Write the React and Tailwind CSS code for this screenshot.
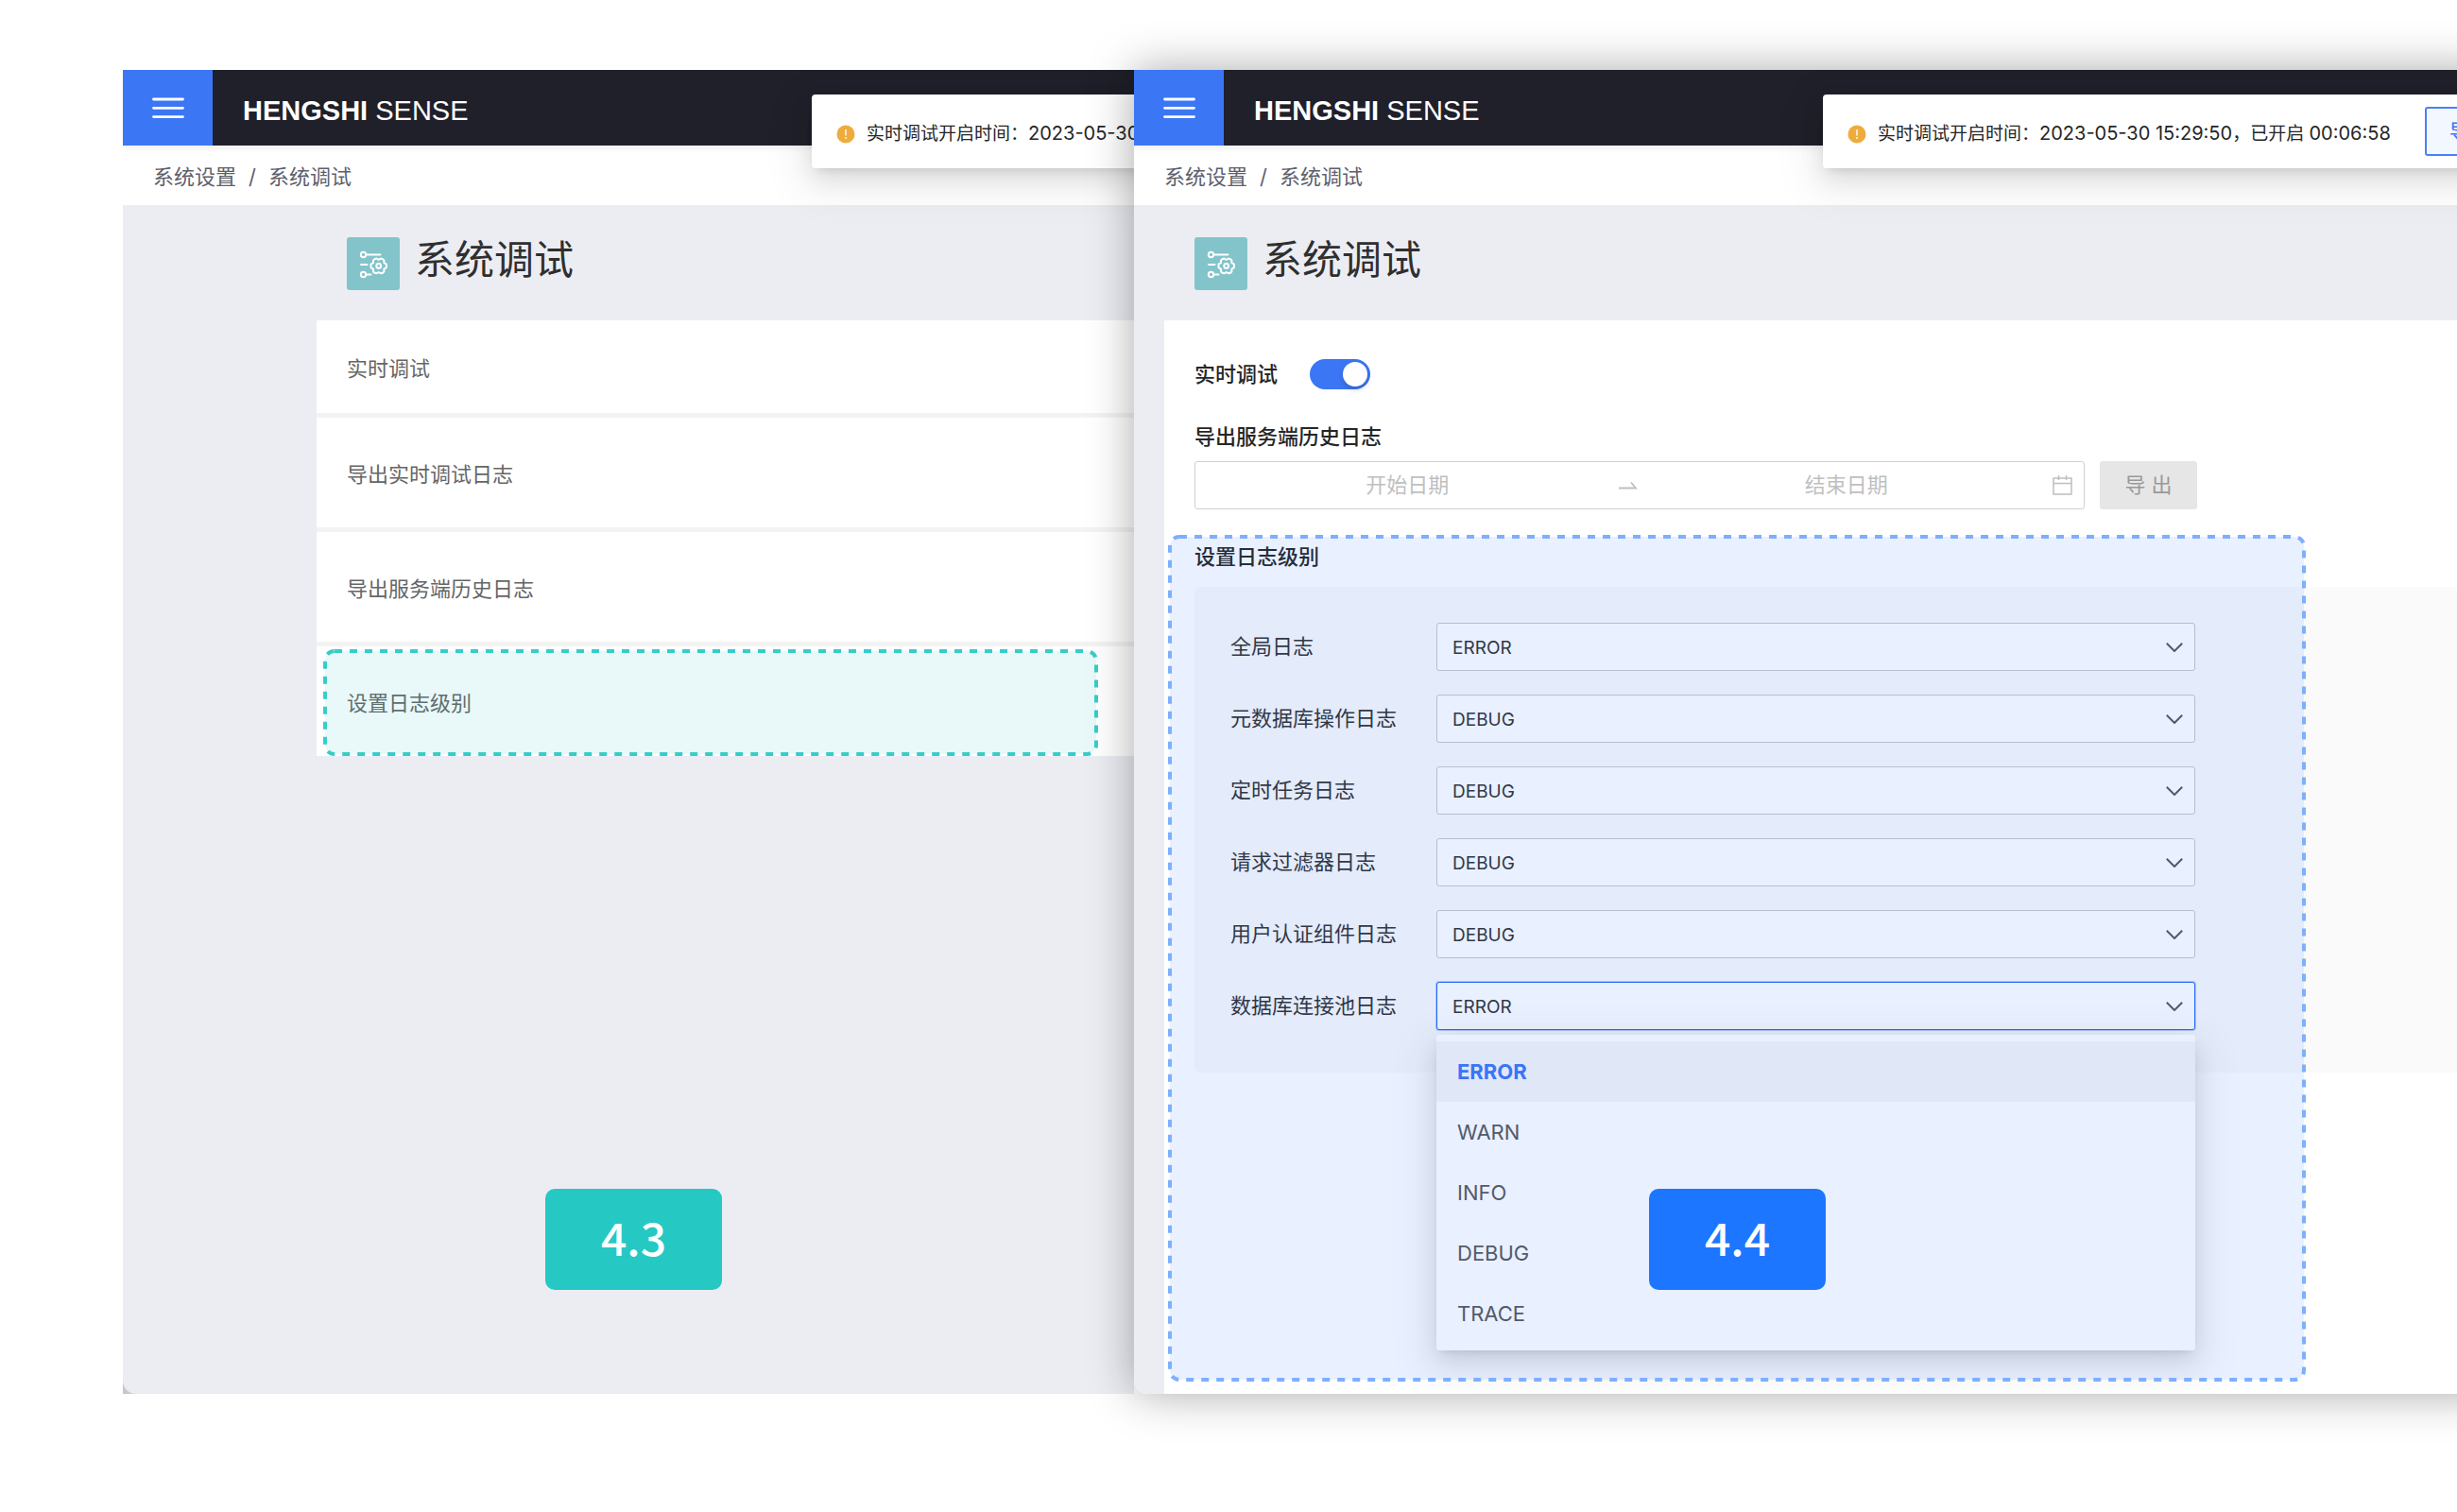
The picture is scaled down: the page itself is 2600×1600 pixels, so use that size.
import { useId, useState } from "react";

const LEVELS = ["ERROR", "WARN", "INFO", "DEBUG", "TRACE"];

const LOGGERS = [
  { id: "global", label: "全局日志", level: "ERROR" },
  { id: "metadb", label: "元数据库操作日志", level: "DEBUG" },
  { id: "schedule", label: "定时任务日志", level: "DEBUG" },
  { id: "filter", label: "请求过滤器日志", level: "DEBUG" },
  { id: "auth", label: "用户认证组件日志", level: "DEBUG" },
  { id: "pool", label: "数据库连接池日志", level: "ERROR", open: true },
];

function DebugIcon() {
  return (
    <svg
      viewBox="0 0 56 56"
      className="size-14 shrink-0 rounded-[3px] bg-[#83c4ca]"
      fill="none"
      stroke="#fff"
      strokeWidth="2"
      strokeLinecap="round"
      strokeLinejoin="round"
      aria-hidden="true"
    >
      <circle cx="17.5" cy="18.5" r="2.7" />
      <path d="M21 18.5h14.5M15 29h6.5M21 39.5h4.5" />
      <circle cx="17.5" cy="39.5" r="2.7" />
      <circle cx="33.7" cy="30.4" r="2.4" />
      <path d="M41.7 28.4Q42.4 30.4 41.7 32.4L39.4 33.7V36.3Q38.1 38.1 36 38.3L33.7 37L31.4 38.3Q29.3 38.1 28 36.3V33.7L25.7 32.4Q25 30.4 25.7 28.4L28 27.1V24.5Q29.3 22.7 31.4 22.5L33.7 23.8L36 22.5Q38.1 22.7 39.4 24.5V27.1Z" />
    </svg>
  );
}

function CalendarIcon() {
  return (
    <svg viewBox="0 0 21 21" className="size-[21px] shrink-0" fill="none" stroke="#bfbfbf" strokeWidth="1.5" aria-hidden="true">
      <path d="M1 3h19v17H1zM1 8.5h19M6.5 0v5M14.5 0v5" />
    </svg>
  );
}

function Highlight({ className, fill, stroke }) {
  return (
    <svg className={`pointer-events-none absolute overflow-visible ${className}`} aria-hidden="true">
      <rect
        x="2"
        y="2"
        rx="10"
        className="h-[calc(100%-4px)] w-[calc(100%-4px)]"
        fill={fill}
        stroke={stroke}
        strokeWidth="4"
        strokeDasharray="8 8"
      />
    </svg>
  );
}

function StepBadge({ className, children }) {
  return (
    <div
      className={`absolute bottom-[110px] flex h-[107px] w-[187px] items-center justify-center rounded-[10px] pb-2 font-["Noto_Sans_CJK_SC",sans-serif] text-[48px] leading-none font-medium text-white ${className}`}
    >
      {children}
    </div>
  );
}

function Toast() {
  return (
    <div
      role="status"
      className="absolute top-[26px] left-[729px] flex h-[78px] items-center rounded bg-white pl-[26px] pr-6 text-[19px] whitespace-nowrap text-[#262626] shadow-[0_5px_10px_-6px_rgba(0,0,0,0.16),0_10px_26px_rgba(0,0,0,0.1),0_14px_45px_13px_rgba(0,0,0,0.06)]"
    >
      <div className="flex items-center gap-3 pt-1.5">
        <svg viewBox="0 0 20 20" className="size-5 shrink-0" aria-hidden="true">
          <circle cx="10" cy="10" r="9.5" fill="#efac3e" />
          <path d="M10 5v6.5" stroke="#fff" strokeWidth="1.4" />
          <circle cx="10" cy="14" r="0.9" fill="#fff" />
        </svg>
        <span>
          实时调试开启时间：<time className="text-xl">2023-05-30 15:29:50</time>，已开启{" "}
          <time className="text-xl">00:06:58</time>
        </span>
      </div>
      <button
        type="button"
        className="ml-9 h-[52px] rounded-[3px] border-2 border-[#4a81f6] bg-[#f3f7ff] px-6 text-[22px] text-[#3b76f5]"
      >
        导出
      </button>
    </div>
  );
}

function AppWindow({ bodyClassName, children }) {
  return (
    <section className="relative flex min-h-[1401px] min-w-0 flex-col overflow-hidden rounded-bl-[14px] bg-[#ecedf3]">
      <header className="relative z-10 flex h-20 shrink-0 bg-[#20202a] shadow-[0_2px_8px_rgba(0,0,0,0.08)]">
        <button type="button" aria-label="菜单" className="flex w-[95px] items-center justify-center bg-[#3b76f5]">
          <svg viewBox="0 0 34 24" className="h-6 w-[34px]" stroke="#fff" strokeWidth="2.8" strokeLinecap="round" aria-hidden="true">
            <path d="M1.5 3h31M1.5 12.3h31M1.5 21.6h31" />
          </svg>
        </button>
        <div className="flex items-center pt-2 pl-8 font-['Liberation_Sans',sans-serif] text-[29px] whitespace-pre text-white">
          <b>HENGSHI</b> SENSE
        </div>
        <Toast />
      </header>
      <nav className="flex h-[63px] shrink-0 items-center gap-[13px] bg-white px-8 pt-1 text-[22px] text-[#5f5f6b]">
        <a href="#settings">系统设置</a>
        <span>/</span>
        <a href="#debug">系统调试</a>
      </nav>
      <div className={`flex flex-1 flex-col ${bodyClassName}`}>
        <div className="flex h-[122px] shrink-0 items-start gap-4 px-8 pt-[34px]">
          <DebugIcon />
          <h1 className="text-[42px] leading-[48px] text-[#2f2f2f]">系统调试</h1>
        </div>
        {children}
      </div>
    </section>
  );
}

function MenuPage() {
  return (
    <AppWindow bodyClassName="pl-[205px]">
      <ul className="flex flex-col gap-[5px] bg-[#f3f3f3] text-[22px] text-[#666]">
        <li className="flex h-[98px] items-center bg-white px-8 pt-1">实时调试</li>
        <li className="flex h-[116px] items-center bg-white px-8 pt-1">导出实时调试日志</li>
        <li className="flex h-[116px] items-center bg-white px-8 pt-1">导出服务端历史日志</li>
        <li className="relative flex h-[116px] items-center bg-white px-8 pt-1">
          设置日志级别
          <Highlight
            className="top-[3px] left-[7px] h-[113px] w-[calc(100%-45px)]"
            fill="rgba(38,190,190,0.1)"
            stroke="#36cdc9"
          />
        </li>
      </ul>
      <StepBadge className="left-[447px] bg-[#26c8c3]">4.3</StepBadge>
    </AppWindow>
  );
}

function LevelSelect({ logger }) {
  const id = useId();
  const [level, setLevel] = useState(logger.level);

  return (
    <div className="flex items-center">
      <label htmlFor={id} className="w-[218px] shrink-0 text-[22px] text-[#333]">
        {logger.label}
      </label>
      <div className="relative flex-1">
        <select
          id={id}
          value={level}
          onChange={(e) => setLevel(e.target.value)}
          className={`block h-[51px] w-full appearance-none rounded-[3px] border bg-white px-4 pt-[3px] text-[19px] text-[#333] outline-none ${
            logger.open ? "border-[#2468f5] ring-1 ring-[#2468f5]/30" : "border-[#c8c8c8]"
          }`}
        >
          {LEVELS.map((item) => (
            <option key={item}>{item}</option>
          ))}
        </select>
        <svg
          viewBox="0 0 18 10"
          className="pointer-events-none absolute top-[21px] right-[13px] h-2.5 w-[18px]"
          fill="none"
          stroke="#595959"
          strokeWidth="2"
          aria-hidden="true"
        >
          <path d="M.8.8 9 9 17.2.8" />
        </svg>
        {logger.open && (
          <div
            role="listbox"
            aria-label={logger.label}
            className="absolute top-14 left-0 w-full rounded-[3px] bg-white py-[7px] text-[22px] text-[#595959] shadow-[0_5px_10px_-6px_rgba(0,0,0,0.16),0_10px_26px_rgba(0,0,0,0.1),0_14px_45px_13px_rgba(0,0,0,0.06)]"
          >
            {LEVELS.map((item) => (
              <button
                key={item}
                type="button"
                role="option"
                aria-selected={item === level}
                onClick={() => setLevel(item)}
                className={`flex h-16 w-full items-center px-[22px] ${
                  item === level ? "bg-[#f5f5f5] font-bold text-[#3b76f5]" : ""
                }`}
              >
                {item}
              </button>
            ))}
          </div>
        )}
      </div>
    </div>
  );
}

function DetailPage() {
  const [debug, setDebug] = useState(true);

  return (
    <AppWindow bodyClassName="pl-8">
      <div className="relative flex-1 bg-white pl-8">
        <label className="flex items-center gap-[34px] pt-[41px] text-[22px] leading-8 font-medium text-[#262626]">
          实时调试
          <input
            type="checkbox"
            checked={debug}
            onChange={(e) => setDebug(e.target.checked)}
            className="h-8 w-16 appearance-none rounded-full bg-[#bfbfbf] p-[3px] before:block before:size-[26px] before:rounded-full before:bg-white before:shadow-[0_3px_6px_rgba(0,35,11,0.2)] checked:bg-[#3b76f5] checked:before:ml-8"
          />
        </label>
        <h2 className="mt-[34px] text-[22px] leading-8 font-medium text-[#262626]">导出服务端历史日志</h2>
        <div className="mt-[10px] mr-[323px] flex gap-4">
          <div className="flex h-[51px] min-w-0 flex-1 items-center rounded-[3px] border border-[#d0d0d0] pr-3 pl-[18px]">
            <input
              aria-label="开始日期"
              placeholder="开始日期"
              className="min-w-0 flex-1 text-center text-[22px] outline-none placeholder:text-[#bfbfbf]"
            />
            <svg viewBox="0 0 52 20" className="h-5 w-[52px] shrink-0" fill="none" stroke="#bfbfbf" strokeWidth="1.8" aria-hidden="true">
              <path d="M17 12.5h18l-5-6" />
            </svg>
            <input
              aria-label="结束日期"
              placeholder="结束日期"
              className="mr-3 min-w-0 flex-1 text-center text-[22px] outline-none placeholder:text-[#bfbfbf]"
            />
            <CalendarIcon />
          </div>
          <button type="button" disabled className="h-[51px] w-[103px] rounded-[3px] bg-[#e6e6e6] text-[22px] text-[#999]">
            导 出
          </button>
        </div>
        <h2 className="mt-[34px] text-[22px] leading-8 font-medium text-[#262626]">设置日志级别</h2>
        <div className="mt-4 flex flex-col gap-[25px] rounded-l-md bg-[#fafafa] pt-[38px] pr-[325px] pb-[45px] pl-[38px]">
          {LOGGERS.map((logger) => (
            <LevelSelect key={logger.id} logger={logger} />
          ))}
        </div>
        <Highlight
          className="top-[227px] left-1 h-[calc(100%-240px)] w-[calc(100%-212px)]"
          fill="rgba(40,112,255,0.1)"
          stroke="#7eafff"
        />
      </div>
      <StepBadge className="left-[545px] bg-[#1d76ff]">4.4</StepBadge>
    </AppWindow>
  );
}

export default function App() {
  return (
    <main className="grid min-h-screen grid-cols-[1070fr_1400fr] items-start overflow-hidden bg-white pt-[74px] pb-[125px] pl-[5%] font-[Inter,'Noto_Sans_CJK_SC',sans-serif]">
      <div className="bg-[#c8c8cb]">
        <MenuPage />
      </div>
      {/* runs past the right edge so its shadow stays even along the top and bottom */}
      <div className="z-10 -mr-12 rounded-bl-[14px] shadow-[0_0_48px_rgba(0,0,0,0.34)]">
        <DetailPage />
      </div>
    </main>
  );
}
